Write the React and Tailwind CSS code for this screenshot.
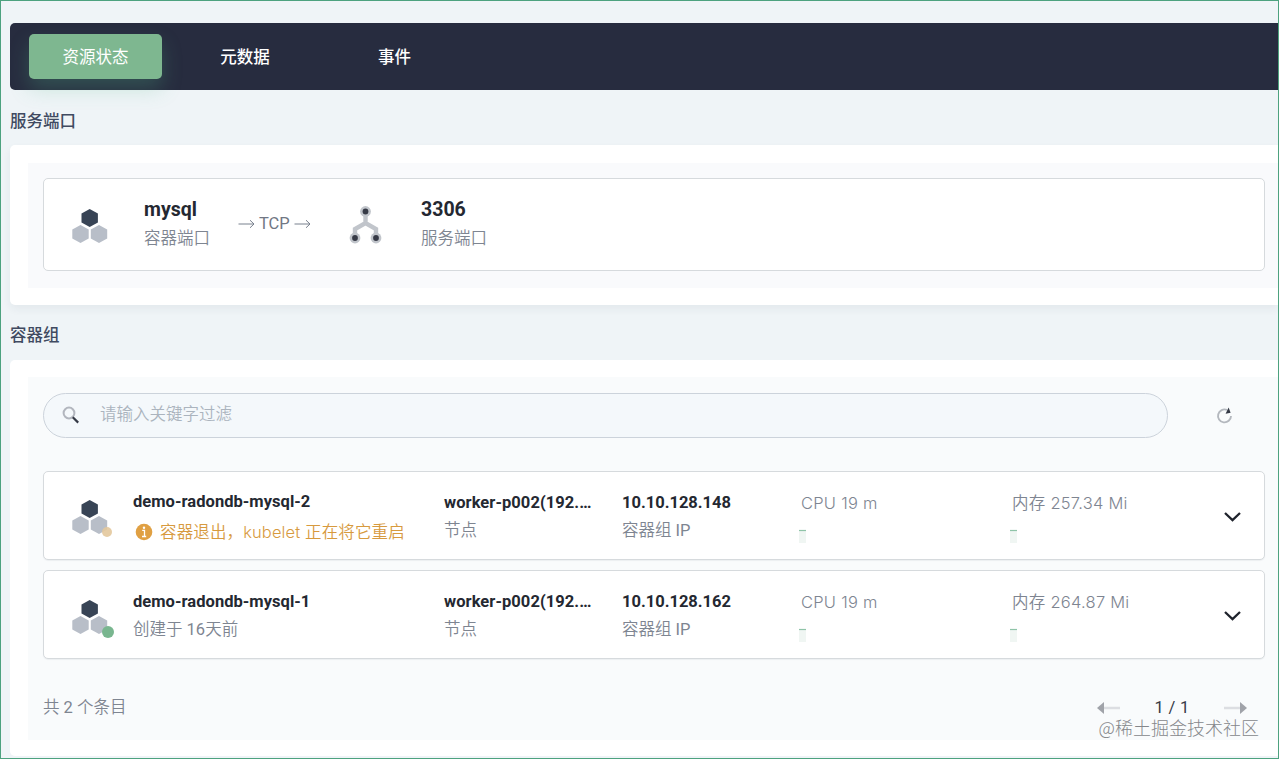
import clsx from 'clsx';

const TABS = ['资源状态', '元数据', '事件'];

const PODS = [
  {
    name: 'demo-radondb-mysql-2',
    warning: '容器退出，kubelet 正在将它重启',
    node: 'worker-p002(192.…',
    ip: '10.10.128.148',
    cpu: 'CPU 19 m',
    memory: '内存 257.34 Mi',
  },
  {
    name: 'demo-radondb-mysql-1',
    created: '创建于 16天前',
    node: 'worker-p002(192.…',
    ip: '10.10.128.162',
    cpu: 'CPU 19 m',
    memory: '内存 264.87 Mi',
  },
];

const PodIcon = () => (
  <svg width="36" height="36" viewBox="0 0 36 36" className="block">
    <path d="M17.7 .9l8.2 4.6v8.9l-8.2 4.5-8.2-4.5V5.500z" fill="#384455" />
    <path d="M8.500 16.900l8.200 4.600v8.900l-8.200 4.500-8.200-4.500v-8.900z" fill="#b8bec8" />
    <path d="M27 16.900l8.200 4.600v8.900L27 34.900l-8.200-4.500v-8.900z" fill="#b8bec8" />
  </svg>
);

const NetworkIcon = () => (
  <svg width="34" height="40" viewBox="0 0 34 40" className="block">
    <path d="M16.500 6v9.500M6 32v-8l10.500-6L27 24v8M16.500 14v5" fill="none" stroke="#c1c5cb" strokeWidth="4.400" />
    {[[16.5, 6.5], [6, 33], [27, 33]].map(([cx, cy]) => (
      <g key={`${cx}-${cy}`}>
        <circle cx={cx} cy={cy} r="5.4" fill="#c1c5cb" />
        <circle cx={cx} cy={cy} r="2.9" fill="#363a46" />
      </g>
    ))}
  </svg>
);

const ThinArrow = () => (
  <svg width="17" height="10" viewBox="0 0 17 10" fill="none" stroke="#79818e">
    <path d="M.5 5h15.500M12 1.200L16 5l-4 3.800" />
  </svg>
);

const InfoIcon = () => (
  <svg width="18" height="18" viewBox="0 0 18 18" className="block shrink-0">
    <circle cx="9" cy="9" r="8.300" fill="#e0a043" />
    <path d="M7.200 7.300h2.300v6M7 13.500h4.200" stroke="#fff" strokeWidth="1.300" fill="none" />
    <circle cx="9" cy="4.700" r="1.200" fill="#fff" />
  </svg>
);

const PageArrow = ({ className }) => (
  <svg width="23" height="14" viewBox="0 0 23 14" className={className}>
    <path d="M6 7h17" stroke="#dcdee2" strokeWidth="2.500" />
    <path d="M0 7l7-6v12z" fill="#a0a3a9" />
  </svg>
);

// usage chart with a single short sample
const Spark = () => (
  <svg width="8" height="15" viewBox="0 0 8 15" className="block">
    <path d="M0 1h7v13H0z" fill="#f0f6f3" />
    <path d="M0 1.500h7" stroke="#8fc4a8" strokeWidth="1.200" />
  </svg>
);

const Title = ({ children, className }) => (
  <h3 className={clsx('text-[16.5px] font-medium leading-6 text-[#404a61]', className)}>{children}</h3>
);

const PodRow = ({ pod }) => (
  <div className="flex h-[89px] rounded-[5px] border border-[#d6dadd] bg-white pl-[28px] shadow-[0_1px_1px_rgba(36,46,66,0.06)]">
    <div className={clsx('relative h-9 w-[61px] shrink-0', pod.warning ? 'mt-[27px]' : 'mt-[28px]')}>
      <PodIcon />
      <span
        className={clsx(
          'absolute rounded-full',
          pod.warning ? 'left-[30px] top-[28px] size-[10px] bg-[#e3c89c]/90' : 'left-[30px] top-[27px] size-[12px] bg-[#79b68f]',
        )}
      />
    </div>
    <div className={clsx('w-[311px] shrink-0', pod.warning ? 'pt-[18px]' : 'pt-[19px]')}>
      <p className="text-[16.5px] font-bold leading-6 tracking-[0.04px] text-[#242831]">{pod.name}</p>
      {pod.warning ? (
        <p className="flex items-center gap-[7px] pl-[2px] pt-[6px] text-[16.5px] font-[350] leading-6 text-[#d79a3e]">
          <InfoIcon />
          <span className="whitespace-nowrap font-['Inter','Noto_Sans_CJK_SC',sans-serif] tracking-[0.13px]">{pod.warning}</span>
        </p>
      ) : (
        <p className="pt-[4px] text-[16.5px] leading-6 text-[#7e8591]">
          <span className="font-[350]">创建于</span> 16<span className="font-[350]">天前</span>
        </p>
      )}
    </div>
    <div className="w-[178px] shrink-0 pt-[19px]">
      <p className="whitespace-nowrap text-[16.5px] font-bold leading-6 tracking-[0.06px] text-[#242831]">{pod.node}</p>
      <p className="pt-[4px] text-[16.5px] font-[350] leading-6 text-[#7e8591]">节点</p>
    </div>
    <div className="w-[179px] shrink-0 pt-[19px]">
      <p className="text-[16.5px] font-bold leading-6 text-[#242831]">{pod.ip}</p>
      <p className="pt-[4px] text-[16.5px] leading-6 text-[#7e8591]">
        <span className="font-[350]">容器组</span> IP
      </p>
    </div>
    {[pod.cpu, pod.memory].map((usage) => (
      <div key={usage} className="w-[211px] shrink-0 pt-[19px] font-['Inter','Noto_Sans_CJK_SC',sans-serif]">
        <p className="text-[16.5px] font-[350] leading-6 tracking-[0.25px] text-[#7e8591]">{usage}</p>
        <div className="-ml-[2px] pt-[14px]">
          <Spark />
        </div>
      </div>
    ))}
    <svg width="18" height="12" viewBox="0 0 18 12" fill="none" className="mt-[39px]">
      <path d="M2 2l7.500 7.200L17 2" stroke="#1f232c" strokeWidth="2.300" />
    </svg>
  </div>
);

export default function App() {
  return (
    <div className="relative h-[759px] w-[1279px] overflow-hidden border border-[#4da27f] bg-[#eff4f7] pl-[9px] pt-[22px] font-['Roboto','Noto_Sans_CJK_SC',sans-serif]">
      <nav className="flex h-[67px] gap-[16.5px] rounded-l-[5px] bg-[#272c3f] pl-[19px] pt-[11px]">
        {TABS.map((tab, i) => (
          <button
            key={tab}
            className={clsx(
              'h-[45px] w-[133px] rounded-[5px] pt-[2px] text-[16.5px] leading-6 text-white',
              i === 0 ? 'bg-[#7eb790] font-normal shadow-[0_10px_20px_0_rgba(85,188,138,0.25)]' : 'font-medium',
            )}
          >
            {tab}
          </button>
        ))}
      </nav>

      <Title className="mt-[20px]">服务端口</Title>
      <section className="mt-[11px] h-[160px] rounded-l-[5px] bg-white pl-[18px] pt-[18px] shadow-[0_4px_8px_0_rgba(36,46,66,0.06)]">
        <div className="h-[125px] bg-[#f9fafc] pl-[15px] pr-[13px] pt-[15px]">
          <div className="flex h-[93px] rounded-[5px] border border-[#d6dadd] bg-white pl-[28px]">
            <div className="mt-[29px] w-[72px]">
              <PodIcon />
            </div>
            <div className="w-[94px] pt-[19px]">
              <p className="text-[19.5px] font-bold leading-6 text-[#242831]">mysql</p>
              <p className="pt-[5px] text-[16.5px] font-[350] leading-6 text-[#7e8591]">容器端口</p>
            </div>
            <div className="mt-[33px] flex h-6 w-[111px] items-center gap-[4px] text-[16.5px] text-[#717784]">
              <ThinArrow />
              TCP
              <ThinArrow />
            </div>
            <div className="mt-[26px] w-[72px]">
              <NetworkIcon />
            </div>
            <div className="pt-[19px]">
              <p className="text-[19.5px] font-bold leading-6 text-[#242831]">3306</p>
              <p className="pt-[5px] text-[16.5px] font-[350] leading-6 text-[#7e8591]">服务端口</p>
            </div>
          </div>
        </div>
      </section>

      <Title className="mt-[19px]">容器组</Title>
      <section className="mt-[12px] h-[396px] rounded-l-[5px] bg-white pl-[18px] pt-[17px]">
        <div className="h-[363px] bg-[#f9fbfc] pl-[15px] pr-[13px] pt-[16px]">
          <div className="flex items-center">
            <div className="flex h-[45px] w-[1125px] items-center rounded-full border border-[#ccd3db] bg-[#f4f8fb] pl-[18px]">
              <svg width="19" height="19" viewBox="0 0 19 19" fill="none">
                <circle cx="7" cy="7" r="5.400" stroke="#b2b6be" strokeWidth="2" />
                <path d="M10.800 11.200l5.400 5.400" stroke="#343945" strokeWidth="2.200" />
              </svg>
              <span className="ml-[19px] pb-[2px] text-[16.5px] font-[350] leading-6 text-[#abb4be]">请输入关键字过滤</span>
            </div>
            <svg width="18" height="18" viewBox="0 0 18 18" fill="none" className="ml-[48px]">
              <path d="M11 2.900A6.500 6.500 0 1 0 15 9" stroke="#b4b8be" strokeWidth="1.900" />
              <path d="M12.600 .500l2 5.300-5 .9z" fill="#343945" />
            </svg>
          </div>
          <div className="mt-[33px] flex flex-col gap-[10px]">
            {PODS.map((pod) => (
              <PodRow key={pod.name} pod={pod} />
            ))}
          </div>
          <div className="mt-[37px] flex items-center justify-between pr-[18px] text-[16.5px] leading-6">
            <span className="text-[#7e8591]">
              <span className="font-[350]">共</span> 2 <span className="font-[350]">个条目</span>
            </span>
            <div className="flex items-center text-[#353a47]">
              <PageArrow />
              <span className="w-[104px] text-center tracking-[0.3px]">1 / 1</span>
              <PageArrow className="rotate-180" />
            </div>
          </div>
        </div>
      </section>
      <span className="absolute bottom-[19px] right-[19px] whitespace-nowrap font-['Noto_Sans_CJK_SC',sans-serif] text-[18px] font-light leading-6 text-[#85878b]">
        @稀土掘金技术社区
      </span>
    </div>
  );
}
